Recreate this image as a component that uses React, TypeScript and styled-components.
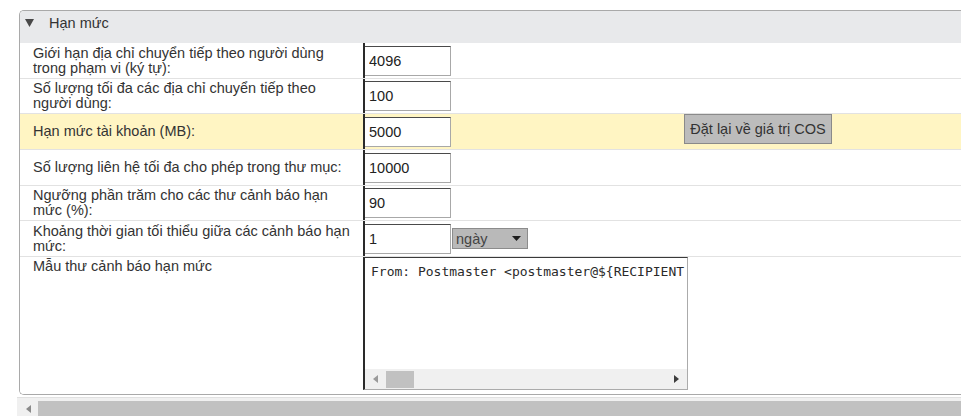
import React from "react";
import styled, { createGlobalStyle } from "styled-components";

const GlobalStyle = createGlobalStyle`
  html, body {
    margin: 0;
    padding: 0;
    overflow: hidden;
    background: #ffffff;
  }
  body {
    font-family: "Liberation Sans", Arial, sans-serif;
    color: #333333;
  }
`;

const Page = styled.div`
  display: flex;
  flex-direction: column;
  padding: 10px 0 0 19px;
  width: 961px;
  box-sizing: border-box;
`;

const Panel = styled.section`
  border: 1px solid #a9a9a9;
  border-right: none;
  border-radius: 5px 0 0 5px;
  overflow: hidden;
  background: #ffffff;
`;

const Header = styled.div`
  box-sizing: border-box;
  height: 32px;
  background: #e8e9eb;
  display: flex;
  align-items: center;
  gap: 15px;
  padding: 0 0 9px 5px;
`;

const Title = styled.span`
  font-size: 14.5px;
  color: #333333;
`;

const Row = styled.div<{ $h: number; $hl?: boolean; $last?: boolean }>`
  display: grid;
  grid-template-columns: 343px 321px 1fr;
  height: ${(p) => p.$h}px;
  background: ${(p) => (p.$hl ? "#fff5c3" : "#ffffff")};
  border-bottom: ${(p) => (p.$last ? "none" : "1px solid #e2e2e2")};
`;

const LabelCell = styled.div<{ $top?: boolean }>`
  display: flex;
  align-items: ${(p) => (p.$top ? "flex-start" : "center")};
  padding: ${(p) => (p.$top ? "2px 10px 0 13px" : "0 10px 0 13px")};
  font-size: 14.5px;
  line-height: 15px;
  color: #333333;
`;

const ValueCell = styled.div<{ $plain?: boolean; $span?: boolean }>`
  display: flex;
  align-items: ${(p) => (p.$plain ? "flex-start" : "center")};
  border-left: ${(p) => (p.$plain ? "none" : "2px solid #2a2a2a")};
  grid-column: ${(p) => (p.$span ? "span 2" : "auto")};
  gap: 1px;
`;

const ActionCell = styled.div`
  display: flex;
  align-items: flex-start;
`;

const TextInput = styled.input`
  box-sizing: border-box;
  width: 86px;
  height: 30px;
  border: none;
  border-top: 1px solid #4a4a4a;
  border-right: 1px solid #a8a8a8;
  border-bottom: 1px solid #a8a8a8;
  padding: 0 0 0 4px;
  margin: 0;
  font-family: "Liberation Sans", Arial, sans-serif;
  font-size: 14.5px;
  color: #222222;
  background: #ffffff;
  outline: none;
`;

const SelectBox = styled.div`
  box-sizing: border-box;
  width: 76px;
  height: 21px;
  background: #b9b9b9;
  border: 1px solid #8c8c8c;
  display: flex;
  align-items: center;
  justify-content: space-between;
  padding: 0 6px 0 3px;
  font-size: 14.5px;
  color: #444444;
`;

const ResetButton = styled.button`
  box-sizing: border-box;
  width: 148px;
  height: 30px;
  margin: 0;
  background: #bcbcbc;
  border: 1px solid #8a8a8a;
  font-family: "Liberation Sans", Arial, sans-serif;
  font-size: 14.5px;
  color: #333333;
  padding: 0;
`;

const TextBox = styled.div`
  box-sizing: border-box;
  width: 325px;
  height: 133px;
  border-top: 1px solid #3a3a3a;
  border-left: 2px solid #2a2a2a;
  border-right: 1px solid #ababab;
  border-bottom: 1px solid #ababab;
  display: flex;
  flex-direction: column;
  background: #ffffff;
`;

const TextContent = styled.pre`
  flex: 1;
  margin: 0;
  padding: 6px 0 0 6px;
  overflow: hidden;
  white-space: pre;
  font-family: "DejaVu Sans Mono", "Liberation Mono", monospace;
  font-size: 13px;
  line-height: 16px;
  color: #2a2a2a;
`;

const HScroll = styled.div`
  height: 20px;
  background: #f0f0f0;
  display: flex;
  align-items: center;
  padding: 0 8px 0 8px;
`;

const Thumb = styled.div<{ $w: number; $h: number }>`
  width: ${(p) => p.$w}px;
  height: ${(p) => p.$h}px;
  background: #c1c1c1;
`;

const Spacer = styled.div<{ $w?: number }>`
  flex: ${(p) => (p.$w ? `0 0 ${p.$w}px` : "1")};
`;

const PageScroll = styled.div`
  margin: 2px 0 0 -2px;
  border-top: 1px solid #e0e0e0;
  background: #f0f0f0;
  padding-top: 3px;
  display: flex;
  align-items: flex-start;
`;

const PageArrowSlot = styled.div`
  width: 21px;
  height: 15px;
  display: flex;
  align-items: center;
  justify-content: center;
  padding-left: 1px;
  box-sizing: border-box;
`;

const PageTrack = styled.div`
  flex: 1;
  height: 20px;
  background: #c1c1c1;
`;

const Arrow = ({ dir, color }: { dir: "left" | "right" | "down"; color: string }) => {
  if (dir === "down") {
    return (
      <svg width="9" height="8" viewBox="0 0 9 8" style={{ display: "block" }}>
        <polygon points="0,0 9,0 4.5,8" fill={color} />
      </svg>
    );
  }
  return (
    <svg width="5" height="8" viewBox="0 0 5 8" style={{ display: "block" }}>
      {dir === "left" ? (
        <polygon points="5,0 5,8 0,4" fill={color} />
      ) : (
        <polygon points="0,0 0,8 5,4" fill={color} />
      )}
    </svg>
  );
};

const SmallDown = () => (
  <svg width="9" height="5" viewBox="0 0 9 5" style={{ display: "block" }}>
    <polygon points="0,0 9,0 4.5,5" fill="#1e1e1e" />
  </svg>
);

type Field = {
  label: string;
  value: string;
  h: number;
  highlight?: boolean;
  reset?: boolean;
  unit?: boolean;
};

const fields: Field[] = [
  { label: "Giới hạn địa chỉ chuyển tiếp theo người dùng trong phạm vi (ký tự):", value: "4096", h: 35 },
  { label: "Số lượng tối đa các địa chỉ chuyển tiếp theo người dùng:", value: "100", h: 34 },
  { label: "Hạn mức tài khoản (MB):", value: "5000", h: 35, highlight: true, reset: true },
  { label: "Số lượng liên hệ tối đa cho phép trong thư mục:", value: "10000", h: 35 },
  { label: "Ngưỡng phần trăm cho các thư cảnh báo hạn mức (%):", value: "90", h: 34 },
  { label: "Khoảng thời gian tối thiểu giữa các cảnh báo hạn mức:", value: "1", h: 35, unit: true },
];

export default function App() {
  return (
    <>
      <GlobalStyle />
      <Page>
        <Panel>
          <Header>
            <Arrow dir="down" color="#484848" />
            <Title>Hạn mức</Title>
          </Header>
          {fields.map((f) => (
            <Row key={f.label} $h={f.h} $hl={f.highlight}>
              <LabelCell>{f.label}</LabelCell>
              <ValueCell>
                <TextInput defaultValue={f.value} />
                {f.unit && (
                  <SelectBox>
                    <span>ngày</span>
                    <SmallDown />
                  </SelectBox>
                )}
              </ValueCell>
              <ActionCell>{f.reset && <ResetButton>Đặt lại về giá trị COS</ResetButton>}</ActionCell>
            </Row>
          ))}
          <Row $h={137} $last>
            <LabelCell $top>Mẫu thư cảnh báo hạn mức</LabelCell>
            <ValueCell $plain $span>
              <TextBox>
                <TextContent>{"From: Postmaster <postmaster@${RECIPIENT"}</TextContent>
                <HScroll>
                  <Arrow dir="left" color="#9a9a9a" />
                  <Spacer $w={8} />
                  <Thumb $w={28} $h={17} />
                  <Spacer />
                  <Arrow dir="right" color="#3c3c3c" />
                </HScroll>
              </TextBox>
            </ValueCell>
          </Row>
        </Panel>
        <PageScroll>
          <PageArrowSlot>
            <Arrow dir="left" color="#8a8a8a" />
          </PageArrowSlot>
          <PageTrack />
        </PageScroll>
      </Page>
    </>
  );
}
